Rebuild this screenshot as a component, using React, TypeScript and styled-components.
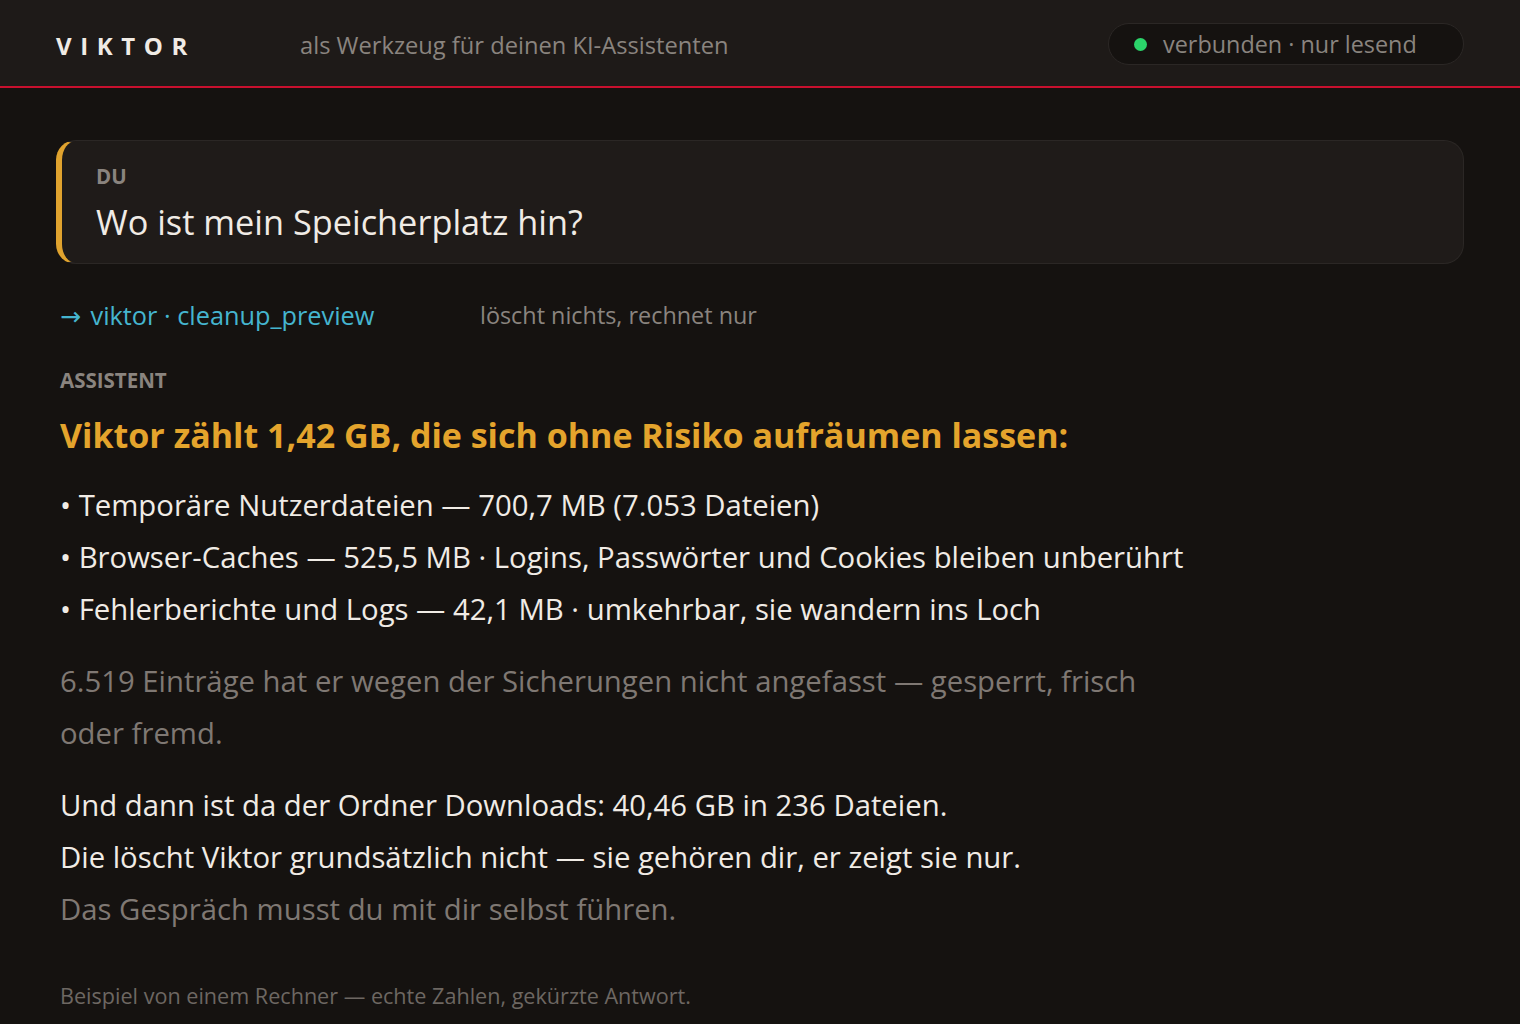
import React from "react";
import styled, { createGlobalStyle } from "styled-components";

const GlobalStyle = createGlobalStyle`
  html, body {
    margin: 0;
    padding: 0;
    background: #151210;
  }
  body {
    font-family: "Open Sans", "Noto Sans", "Liberation Sans", sans-serif;
    color: #f0ebe5;
    -webkit-font-smoothing: antialiased;
  }
`;

const bullets = [
  "Temporäre Nutzerdateien — 700,7 MB (7.053 Dateien)",
  "Browser-Caches — 525,5 MB · Logins, Passwörter und Cookies bleiben unberührt",
  "Fehlerberichte und Logs — 42,1 MB · umkehrbar, sie wandern ins Loch",
];

const App: React.FC = () => {
  return (
    <Page>
      <GlobalStyle />
      <TopBar>
        <Brand>VIKTOR</Brand>
        <Tagline>als Werkzeug für deinen KI-Assistenten</Tagline>
        <Status>
          <Dot />
          verbunden · nur lesend
        </Status>
      </TopBar>
      <Main>
        <UserCard>
          <Role>DU</Role>
          <Question>Wo ist mein Speicherplatz hin?</Question>
        </UserCard>

        <ToolLine>
          <ToolCall>
            <Arrow>→</Arrow> viktor · cleanup_preview
          </ToolCall>
          <ToolNote>löscht nichts, rechnet nur</ToolNote>
        </ToolLine>

        <AssistantRole>ASSISTENT</AssistantRole>
        <Headline>Viktor zählt 1,42 GB, die sich ohne Risiko aufräumen lassen:</Headline>

        <List>
          {bullets.map((b) => (
            <Line key={b}>• {b}</Line>
          ))}
        </List>

        <Block muted narrow>
          6.519 Einträge hat er wegen der Sicherungen nicht angefasst — gesperrt, frisch oder fremd.
        </Block>

        <Block>
          <Line>Und dann ist da der Ordner Downloads: 40,46 GB in 236 Dateien.</Line>
          <Line>Die löscht Viktor grundsätzlich nicht — sie gehören dir, er zeigt sie nur.</Line>
          <Line muted>Das Gespräch musst du mit dir selbst führen.</Line>
        </Block>

        <Footnote>Beispiel von einem Rechner — echte Zahlen, gekürzte Antwort.</Footnote>
      </Main>
    </Page>
  );
};

const Page = styled.div`
  min-height: 100vh;
  background: #151210;
`;

const TopBar = styled.header`
  height: 88px;
  box-sizing: border-box;
  display: flex;
  align-items: center;
  padding: 0 56px;
  background: #1e1a18;
  border-bottom: 2px solid #c8102e;
`;

const Brand = styled.div`
  width: 244px;
  font-size: 24px;
  font-weight: 700;
  letter-spacing: 8.6px;
  color: #f0ebe5;
  padding-top: 4px;
`;

const Tagline = styled.div`
  flex: 1;
  font-size: 23.7px;
  color: #8a847f;
  padding-top: 4px;
`;

const Status = styled.div`
  display: flex;
  align-items: center;
  gap: 16px;
  height: 42px;
  box-sizing: border-box;
  width: 356px;
  padding: 0 24px 0 25px;
  margin-top: 2px;
  border-radius: 21px;
  background: #151210;
  border: 1px solid #2b2725;
  font-size: 23.4px;
  color: #8a847f;
`;

const Dot = styled.span`
  width: 13px;
  height: 13px;
  border-radius: 50%;
  background: #2bd46a;
  flex-shrink: 0;
`;

const Main = styled.main`
  padding: 52px 56px 40px;
`;

const UserCard = styled.section`
  padding: 21px 34px 17px;
  border-radius: 20px;
  background: #1f1b19;
  border: 1px solid #2b2725;
  border-left: 6px solid #e0a32e;
`;

const Role = styled.div`
  font-size: 20.5px;
  line-height: 28px;
  font-weight: 700;
  color: #8a847f;
`;

const Question = styled.div`
  margin-top: 8px;
  font-size: 34.3px;
  line-height: 48px;
  color: #f0ebe5;
`;

const ToolLine = styled.div`
  display: grid;
  grid-template-columns: 420px auto;
  align-items: center;
  height: 36px;
  margin-top: 33px;
  padding-left: 4px;
  line-height: 36px;
`;

const ToolCall = styled.span`
  font-size: 25.3px;
  color: #45b5cf;
`;

const Arrow = styled.span`
  display: inline-block;
  margin-right: 3px;
  font-family: "DejaVu Sans", sans-serif;
  font-size: 25px;
  line-height: 1;
`;

const ToolNote = styled.span`
  font-size: 23.4px;
  color: #8a847f;
`;

const AssistantRole = styled(Role)`
  margin-top: 33px;
  padding-left: 4px;
`;

const Headline = styled.h2`
  margin: 17px 0 0;
  padding-left: 4px;
  font-size: 34px;
  line-height: 48px;
  font-weight: 700;
  color: #e4a42c;
`;

const List = styled.div`
  margin-top: 20px;
  padding-left: 4px;
`;

const Line = styled.div<{ muted?: boolean }>`
  font-size: 29.3px;
  line-height: 52px;
  color: ${(p) => (p.muted ? "#7f7873" : "#f0ebe5")};
`;

const Block = styled.div<{ muted?: boolean; narrow?: boolean }>`
  margin-top: 20px;
  padding-left: 4px;
  max-width: ${(p) => (p.narrow ? "1110px" : "none")};
  font-size: 29.3px;
  line-height: 52px;
  color: ${(p) => (p.muted ? "#7f7873" : "#f0ebe5")};
`;

const Footnote = styled.div`
  margin-top: 47px;
  padding-left: 4px;
  font-size: 21.6px;
  line-height: 28px;
  color: #6d6762;
`;

export default App;
